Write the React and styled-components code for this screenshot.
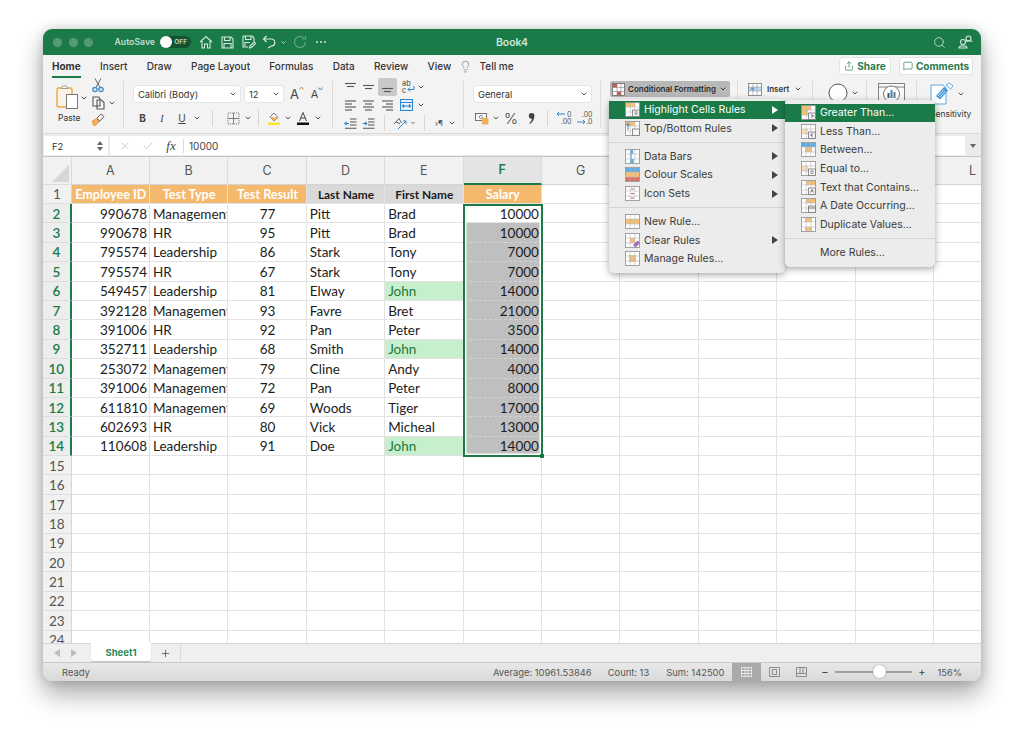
import React from "react";
import styled, { createGlobalStyle } from "styled-components";
import { Search, Check, X, Lightbulb, MessageSquare, Share, ChevronDown, Plus } from "lucide-react";

const UI_FONT = `Inter, "Liberation Sans", Arial, sans-serif`;
const CELL_FONT = `Lato, "Open Sans", sans-serif`;

const GlobalStyle = createGlobalStyle`
  html, body { margin: 0; padding: 0; background: #fff; }
  body { font-family: ${UI_FONT}; width: 1024px; height: 738px; overflow: hidden; }
  * { box-sizing: border-box; }
`;

const Page = styled.div`
  padding: 29px 43px 0;
`;

const Window = styled.div`
  position: relative;
  width: 938px;
  height: 652px;
  border-radius: 9px;
  overflow: visible;
  background: #f3f3f3;
  box-shadow: 0 14px 26px rgba(0, 0, 0, 0.32), 0 0 12px rgba(0, 0, 0, 0.18);
  display: flex;
  flex-direction: column;
`;

/* title bar */
const TitleBar = styled.div`
  height: 26px;
  flex: none;
  background: #1a7a48;
  border-radius: 9px 9px 0 0;
  display: grid;
  grid-template-columns: 1fr auto 1fr;
  align-items: center;
  color: #fff;
`;
const TitleLeft = styled.div`
  display: flex;
  align-items: center;
  padding-left: 10px;
`;
const TitleRight = styled.div`
  display: flex;
  justify-content: flex-end;
  align-items: center;
  gap: 12px;
  padding-right: 8px;
`;
const Light = styled.span`
  width: 9px;
  height: 9px;
  border-radius: 50%;
  margin-right: 6.5px;
  background: #559a76;
`;
const AutoSave = styled.span`
  margin-left: 15px;
  font-size: 8.7px;
  font-weight: 600;
  color: #c5ded0;
`;
const Toggle = styled.span`
  width: 31px;
  height: 12px;
  margin: 0 4px 0 5px;
  border-radius: 6px;
  background: #14532f;
  display: flex;
  align-items: center;
  justify-content: flex-end;
  padding-right: 4px;
  font-size: 6.5px;
  font-weight: 700;
  color: #b7cdbf;
  position: relative;
`;
const Knob = styled.span`
  position: absolute;
  left: 0;
  top: 0;
  width: 12px;
  height: 12px;
  border-radius: 50%;
  background: #fff;
`;
const TitleIcons = styled.div`
  display: flex;
  align-items: center;
`;
const TitleIcon = styled.span`
  width: ${(p) => p.$w}px;
  display: flex;
  justify-content: center;
  opacity: ${(p) => p.$dim || 1};
`;
const BookTitle = styled.div`
  font-size: 10.5px;
  font-weight: 600;
  color: #cfe4d8;
`;

/* tabs */
const TabRow = styled.div`
  height: 22px;
  flex: none;
  display: flex;
  align-items: center;
  padding: 0 8px 0 9px;
  gap: 19.3px;
  font-size: 10px;
  font-weight: 500;
  color: #333;
`;
const Tab = styled.span`
  position: relative;
  font-weight: ${(p) => (p.$active ? 700 : 500)};
`;
const TabLine = styled.span`
  position: absolute;
  left: 0;
  right: 0;
  top: 16px;
  height: 2px;
  background: #1a7a48;
`;
const TellMe = styled.span`
  display: flex;
  align-items: center;
  gap: 8px;
  margin-left: -12px;
`;
const TopButtons = styled.div`
  margin-left: auto;
  display: flex;
  gap: 8px;
`;
const TopButton = styled.span`
  height: 18px;
  width: ${(p) => p.$w}px;
  background: #fff;
  border: 1px solid #e3e3e3;
  border-radius: 3px;
  display: flex;
  align-items: center;
  justify-content: center;
  gap: 3px;
  font-size: 10px;
  font-weight: 700;
  color: #1f7a4d;
`;

/* ribbon */
const Ribbon = styled.div`
  height: 57px;
  flex: none;
  display: flex;
  align-items: stretch;
  border-bottom: 1px solid #d9d9d9;
`;
const Group = styled.div`
  width: ${(p) => p.$w}px;
  flex: none;
  padding: ${(p) => p.$top || 0}px 0 0 ${(p) => p.$left || 0}px;
  display: flex;
  flex-direction: column;
  gap: ${(p) => p.$gap || 0}px;
`;
const GroupRow = styled.div`
  display: flex;
  align-items: flex-start;
`;
const Sep = styled.span`
  width: 1px;
  flex: none;
  height: 47px;
  margin-top: 4px;
  background: #dcdcdc;
`;
const PasteCol = styled.div`
  width: 34px;
  display: flex;
  flex-direction: column;
  align-items: flex-start;
  padding-top: 8px;
  font-size: 8.5px;
  color: #333;
`;
const PasteLabel = styled.span`
  margin: 3px 0 0 2px;
`;
const ToolRow = styled.div`
  height: ${(p) => p.$h || 18}px;
  display: flex;
  align-items: center;
`;
const Tool = styled.span`
  width: ${(p) => p.$w}px;
  height: 18px;
  flex: none;
  display: flex;
  align-items: center;
  justify-content: center;
  border-radius: 2px;
  background: ${(p) => (p.$on ? "#c9c9c9" : "transparent")};
  font-size: ${(p) => p.$fs || 11}px;
  font-weight: ${(p) => p.$fw || 400};
  font-style: ${(p) => (p.$it ? "italic" : "normal")};
  font-family: ${(p) => (p.$serif ? '"Liberation Serif", serif' : UI_FONT)};
  color: #444;
`;
const Divider = styled.span`
  width: ${(p) => p.$w}px;
  height: 16px;
  flex: none;
  display: flex;
  justify-content: center;
  &::before {
    content: "";
    width: 1px;
    background: #d5d5d5;
  }
`;
const Select = styled.div`
  width: ${(p) => p.$w}px;
  height: 18px;
  flex: none;
  margin-right: ${(p) => p.$mr || 0}px;
  padding: 0 3px 0 4px;
  background: #fff;
  border: 1px solid #e6e6e6;
  border-radius: 3px;
  display: flex;
  align-items: center;
  justify-content: space-between;
  font-size: 9.3px;
  color: #333;
`;
const CondButton = styled.div`
  width: 120px;
  height: 16px;
  display: flex;
  align-items: center;
  gap: 3px;
  padding: 0 2px;
  background: #b8b8b8;
  border-radius: 2px;
  font-size: 8px;
  font-weight: 600;
  color: #2c2c2c;
  white-space: nowrap;
`;
const InsertButton = styled.div`
  height: 16px;
  display: flex;
  align-items: center;
  gap: 5px;
  font-size: 8px;
  font-weight: 600;
  color: #333;
`;
const BigIcons = styled.div`
  display: flex;
  align-items: center;
  gap: ${(p) => p.$gap || 2}px;
`;
const SensLabel = styled.div`
  margin-top: 3px;
  font-size: 8.5px;
  color: #333;
`;

/* formula bar */
const FormulaBar = styled.div`
  height: 23px;
  flex: none;
  display: flex;
  align-items: stretch;
  padding: 2px 0 1px 1px;
  background: #ebebeb;
  border-bottom: 1px solid #c6c6c6;
`;
const NameBox = styled.div`
  width: 64px;
  padding: 1px 5px 0 8px;
  background: #fff;
  display: flex;
  align-items: center;
  justify-content: space-between;
  font-size: 9.5px;
  color: #333;
`;
const Stepper = styled.span`
  display: flex;
  flex-direction: column;
  gap: 2px;
`;
const Arrow = styled.span`
  width: 0;
  height: 0;
  border-left: 3px solid transparent;
  border-right: 3px solid transparent;
  ${(p) => (p.$up ? "border-bottom" : "border-top")}: 4px solid #666;
`;
const FormulaInput = styled.div`
  flex: 1;
  margin-left: 2px;
  padding: 1px 0 0 3px;
  background: #fff;
  display: flex;
  align-items: center;
  font-size: 10px;
  color: #444;
`;
const FormulaIcon = styled.span`
  width: ${(p) => p.$w}px;
  display: flex;
  justify-content: center;
  color: #bdbdbd;
`;
const Fx = styled.span`
  font-family: "Liberation Serif", serif;
  font-style: italic;
  font-size: 13px;
  color: #444;
`;
const FormulaValue = styled.span`
  padding-left: 5px;
  border-left: 1px solid #dcdcdc;
  line-height: 14px;
`;
const FormulaEnd = styled.div`
  width: 16px;
  display: flex;
  align-items: center;
  justify-content: center;
`;

/* sheet */
const SheetArea = styled.div`
  position: relative;
  flex: 1;
  min-height: 0;
  overflow: hidden;
  background: #fff;
`;
const SheetGrid = styled.div`
  display: grid;
  grid-template-columns: 28.6px repeat(12, 78.4px);
  grid-template-rows: 27.6px repeat(24, 19.4px);
`;
const Corner = styled.div`
  background: #f1f1f1;
  border-right: 1px solid #dcdcdc;
  border-bottom: 1px solid #dcdcdc;
  position: relative;
  &::after {
    content: "";
    position: absolute;
    right: 2px;
    bottom: 2px;
    border-style: solid;
    border-width: 0 0 17px 17px;
    border-color: transparent transparent #d7d7d7 transparent;
  }
`;
const ColHead = styled.div`
  display: flex;
  align-items: center;
  justify-content: center;
  background: ${(p) => (p.$sel ? "#e4e4e4" : "#f1f1f1")};
  border-right: 1px solid #dcdcdc;
  border-bottom: ${(p) => (p.$sel ? "2px solid #1a7a48" : "1px solid #d4d4d4")};
  font-size: 12.5px;
  color: ${(p) => (p.$sel ? "#1a7a48" : "#555")};
  font-weight: ${(p) => (p.$sel ? 600 : 400)};
`;
const RowHead = styled.div`
  display: flex;
  align-items: center;
  justify-content: center;
  padding-top: 1px;
  background: ${(p) => (p.$sel ? "#ededed" : "#f1f1f1")};
  border-right: ${(p) => (p.$sel ? "2px solid #1a7a48" : "1px solid #d4d4d4")};
  border-bottom: 1px solid #dedede;
  font-family: ${CELL_FONT};
  font-size: 13.5px;
  font-weight: ${(p) => (p.$sel ? 600 : 400)};
  color: ${(p) => (p.$sel ? "#1a7a48" : "#555")};
`;
const cellBackgrounds = { orange: "#f4b96c", gray: "#d9d9d9", john: "#c6efce", sel: "#bfbfbf" };
const Cell = styled.div`
  min-width: 0;
  overflow: hidden;
  white-space: nowrap;
  display: flex;
  align-items: center;
  padding: 1px 2px 0 3px;
  justify-content: ${(p) => p.$align || "flex-start"};
  background: ${(p) => cellBackgrounds[p.$bg] || "#fff"};
  border-right: 1px solid ${(p) => (p.$bg === "sel" ? "#bfbfbf" : "#e2e2e2")};
  border-bottom: ${(p) => (p.$bg === "sel" ? "1px dashed #d2d2d2" : "1px solid #e2e2e2")};
  font-family: ${CELL_FONT};
  font-size: ${(p) => (p.$bg === "orange" ? 12.6 : p.$bg === "gray" ? 11.9 : 13.5)}px;
  font-weight: ${(p) => (p.$bold ? 700 : 400)};
  color: ${(p) => (p.$bg === "john" ? "#1c7a3a" : p.$bg === "orange" ? "#fff" : "#1c1c1c")};
`;
const Selection = styled.div`
  position: absolute;
  left: 420px;
  top: 46.5px;
  width: 79.5px;
  height: 253px;
  border: 2px solid #1a7a48;
  box-shadow: inset 0 0 0 1.5px #fff;
  pointer-events: none;
  &::after {
    content: "";
    position: absolute;
    right: -3.5px;
    bottom: -3.5px;
    width: 4px;
    height: 4px;
    background: #1a7a48;
  }
`;

/* sheet tabs and status */
const SheetTabs = styled.div`
  height: 20px;
  flex: none;
  display: flex;
  align-items: flex-start;
  background: #efefef;
  border-top: 1px solid #d5d5d5;
  border-bottom: 1px solid #c9c9c9;
  font-size: 9.5px;
  color: #444;
`;
const TabArrows = styled.div`
  width: 48px;
  height: 100%;
  display: flex;
  align-items: center;
  padding-left: 11px;
  gap: 11px;
`;
const SideArrow = styled.span`
  width: 0;
  height: 0;
  border-top: 4px solid transparent;
  border-bottom: 4px solid transparent;
  ${(p) => (p.$left ? "border-right" : "border-left")}: 6px solid #bdbdbd;
`;
const SheetTab = styled.div`
  width: 60px;
  height: 18px;
  margin-top: -1px;
  background: #fff;
  border-radius: 0 0 2px 2px;
  box-shadow: 0 1px 1px rgba(0, 0, 0, 0.2);
  display: flex;
  align-items: center;
  justify-content: center;
  font-weight: 700;
  color: #2c8a5a;
`;
const AddSheet = styled.div`
  width: 30px;
  height: 18px;
  border-right: 1px solid #d9d9d9;
  display: flex;
  align-items: center;
  justify-content: center;
  color: #444;
`;
const StatusBar = styled.div`
  height: 18px;
  flex: none;
  display: flex;
  align-items: center;
  border-radius: 0 0 9px 9px;
  background: linear-gradient(#e8e8e8, #d9d9d9);
  font-size: 9.4px;
  color: #555;
  padding-left: 19px;
`;
const StatusRight = styled.div`
  margin-left: auto;
  display: flex;
  align-items: center;
  height: 100%;
`;
const StatusText = styled.span`
  margin-right: ${(p) => p.$mr}px;
`;
const ViewBtn = styled.span`
  width: ${(p) => p.$w}px;
  height: 100%;
  margin-right: ${(p) => p.$mr || 0}px;
  display: flex;
  align-items: center;
  justify-content: center;
  background: ${(p) => (p.$on ? "#a9a9a9" : "transparent")};
`;
const Slider = styled.span`
  position: relative;
  width: 77px;
  height: 2px;
  margin: 0 4px 0 5px;
  background: #a0a0a0;
`;
const SliderKnob = styled.span`
  position: absolute;
  left: 38px;
  top: -6px;
  width: 13px;
  height: 13px;
  border-radius: 50%;
  background: #fff;
  box-shadow: 0 0 2px rgba(0, 0, 0, 0.35);
`;
const Zoom = styled.span`
  margin: 0 19px 0 10px;
`;

/* menus */
const Menu = styled.div`
  position: absolute;
  left: ${(p) => p.$left}px;
  top: ${(p) => p.$top}px;
  width: ${(p) => p.$w}px;
  padding: ${(p) => p.$pad}px 0 5px;
  background: #ececec;
  border-radius: 5px;
  box-shadow: 0 2px 7px rgba(0, 0, 0, 0.35);
  font-size: 10.5px;
  font-weight: 400;
  color: #3a3a3a;
  z-index: ${(p) => p.$z || 5};
`;
const MenuItem = styled.div`
  height: 18.6px;
  display: flex;
  align-items: center;
  padding-left: ${(p) => p.$left}px;
  background: ${(p) => (p.$on ? "#1a7a48" : "transparent")};
  color: ${(p) => (p.$on ? "#fff" : "inherit")};
`;
const MenuIcon = styled.span`
  width: 19px;
  flex: none;
  display: flex;
`;
const MenuArrow = styled.span`
  margin-left: auto;
  margin-right: 7px;
  width: 0;
  height: 0;
  border-top: 4px solid transparent;
  border-bottom: 4px solid transparent;
  border-left: 6px solid ${(p) => (p.$on ? "#fff" : "#444")};
`;
const MenuSep = styled.div`
  height: 1px;
  margin: 4.2px 0;
  background: #d4d4d4;
`;

/* icons */
const Chev = ({ size = 8, color = "#444" }) => <ChevronDown size={size} color={color} strokeWidth={2.8} />;

const Glyph = ({ w = 14, h = 14, children, stroke = "currentColor", sw = 1.1 }) => (
  <svg width={w} height={h} viewBox={`0 0 ${w} ${h}`} fill="none" stroke={stroke} strokeWidth={sw}>
    {children}
  </svg>
);

const Lines = ({ rows }) => (
  <Glyph w={13} h={11} stroke="#555">
    {rows.map(([x1, x2, y, color], i) => (
      <path key={i} d={`M${x1} ${y}H${x2}`} stroke={color || "#555"} />
    ))}
  </Glyph>
);

const alignTop = [[1, 12, 1.5], [3, 10, 4.5]];
const alignMid = [[1, 12, 3.5], [3, 10, 6.5]];
const alignBottom = [[1, 12, 6.5], [3, 10, 9.5]];
const alignLeft = [[1, 12, 1], [1, 8, 4], [1, 12, 7], [1, 8, 10]];
const alignCenter = [[1, 12, 1], [3, 10, 4], [1, 12, 7], [3, 10, 10]];
const alignRight = [[1, 12, 1], [5, 12, 4], [1, 12, 7], [5, 12, 10]];

const IndentIcon = ({ right }) => (
  <Glyph w={13} h={11} stroke="#555">
    <path d="M6 1H12.5M6 4H12.5M6 7H12.5M1 10.2H12.5" />
    <path d={right ? "M.5 5.5H4.5M3 3.8l1.8 1.7L3 7.2" : "M5 5.5H1M2.6 3.8L.8 5.5l1.8 1.7"} stroke="#2a87d0" />
  </Glyph>
);

const PasteIcon = () => (
  <svg width="23" height="25" viewBox="0 0 23 25" fill="none">
    <rect x="1" y="3" width="15" height="19" rx="1.5" stroke="#eba64a" strokeWidth="1.4" fill="#fbf3e6" />
    <path d="M5.5 3.5L6.5 1h4l1 2.5z" fill="#fff" stroke="#8a8a8a" strokeWidth=".8" />
    <rect x="10.5" y="9.5" width="11" height="14" fill="#fff" stroke="#777" strokeWidth="1" />
  </svg>
);
const CutIcon = () => (
  <svg width="12" height="15" viewBox="0 0 12 15" fill="none">
    <path d="M3 .5L8 9.5M9 .5L4 9.5" stroke="#666" strokeWidth="1" />
    <circle cx="3" cy="11.5" r="2.2" fill="#cfe3f3" stroke="#3d87c4" strokeWidth="1.2" />
    <circle cx="9" cy="11.5" r="2.2" fill="#cfe3f3" stroke="#3d87c4" strokeWidth="1.2" />
  </svg>
);
const CopyIcon = () => (
  <Glyph w={13} h={14} stroke="#555">
    <path d="M1 1H6.5L8 2.5V10H1zM5 4H9.5L12 6.5V13H5z" fill="#f6f6f6" />
  </Glyph>
);
const PainterIcon = () => (
  <svg width="14" height="13" viewBox="0 0 14 13" fill="none">
    <path d="M1 8L5.5 5.5L8 9L4.5 12.5H2.5z" fill="#f0b05a" stroke="#e29a3d" strokeWidth=".8" />
    <path d="M6 5L10 1L13 3.5L8.5 8.5z" stroke="#555" strokeWidth=".9" />
  </svg>
);
const CommaIcon = () => (
  <svg width="7" height="13" viewBox="0 0 7 13" fill="#444">
    <path d="M3.5 1a2.8 2.8 0 0 1 2.9 3c0 3-1.6 6-4.4 8l-.7-.8c1.6-1.4 2.4-2.8 2.6-4.4A2.8 2.8 0 1 1 3.5 1z" />
  </svg>
);
const FontSizeRow = styled.span`
  display: flex;
  align-items: flex-start;
  color: #444;
  font-size: ${(p) => (p.$up ? 13 : 11)}px;
`;
const FontSizeIcon = ({ up }) => (
  <FontSizeRow $up={up}>
    A
    <svg width="5" height="4" viewBox="0 0 5 4" fill="none" stroke={up ? "#c98a2b" : "#2a87d0"} strokeWidth="1">
      <path d={up ? "M.5 3.5L2.5 1L4.5 3.5" : "M.5 .5L2.5 3L4.5 .5"} />
    </svg>
  </FontSizeRow>
);
const BordersIcon = () => (
  <Glyph w={13} h={13} stroke="#777" sw={0.9}>
    <path d="M1 1H12V12H1zM6.5 1V12M1 6.5H12" strokeDasharray="1.2 .8" />
    <path d="M1 6.5H12M6.5 1V12" />
  </Glyph>
);
const FillIcon = () => (
  <svg width="14" height="14" viewBox="0 0 14 14" fill="none">
    <path d="M3 6L7 2L11 6.5L7 10z" fill="#fff" stroke="#666" strokeWidth=".9" />
    <path d="M3 6.2H10.5L7 10z" fill="#f0b05a" />
    <rect x="1" y="11.5" width="12" height="2.5" fill="#f7e829" />
  </svg>
);
const FontColorIcon = () => (
  <svg width="14" height="14" viewBox="0 0 14 14" fill="none">
    <path d="M3.5 10L7 1.5L10.5 10M4.8 7H9.2" stroke="#444" strokeWidth="1" />
    <rect x="1" y="11.5" width="12" height="2.5" fill="#111" />
  </svg>
);
const WrapBox = styled.span`
  position: relative;
  display: flex;
  flex-direction: column;
  font-size: 7.5px;
  line-height: 7px;
  color: #444;
  svg {
    position: absolute;
    left: 5px;
    top: 6px;
  }
`;
const WrapIcon = () => (
  <WrapBox>
    <span>ab</span>
    <span>c</span>
    <svg width="8" height="7" viewBox="0 0 8 7" fill="none" stroke="#2a87d0" strokeWidth="1">
      <path d="M7 0V3.5H1M3 1.5L1 3.5L3 5.5" />
    </svg>
  </WrapBox>
);
const MergeIcon = () => (
  <Glyph w={13} h={12} stroke="#2a87d0">
    <rect x=".5" y=".5" width="12" height="11" fill="#eaf3fa" />
    <path d="M.5 3.5H12.5M2.5 7H10.5M4 5.5L2.5 7L4 8.5M9 5.5L10.5 7L9 8.5" />
  </Glyph>
);
const OrientIcon = () => (
  <svg width="14" height="13" viewBox="0 0 14 13" fill="none">
    <path d="M1 7L6 1.5L8.5 6M3 5l4 1.6" stroke="#555" strokeWidth=".9" />
    <path d="M5 12L13 4M10 4H13V7" stroke="#2a87d0" strokeWidth="1" />
  </svg>
);
const CurrencyIcon = () => (
  <svg width="14" height="13" viewBox="0 0 14 13" fill="none">
    <rect x=".5" y="1.5" width="11" height="7" stroke="#666" strokeWidth=".9" fill="#f7f7f7" />
    <circle cx="6" cy="5" r="1.6" stroke="#666" strokeWidth=".7" />
    <rect x="7" y="6" width="6.5" height="6.5" rx="1" fill="#f0b05a" />
  </svg>
);
const DecimalBox = styled.span`
  position: relative;
  display: block;
  width: 16px;
  height: 14px;
  font-size: 7px;
  line-height: 7px;
  color: #555;
  text-align: right;
  svg {
    position: absolute;
    left: 0;
    top: ${(p) => (p.$more ? 8 : 0)}px;
  }
`;
const DecimalIcon = ({ more }) => (
  <DecimalBox $more={more}>
    {more ? ".00" : "0"}
    <br />
    {more ? ".0" : ".00"}
    <svg width="9" height="6" viewBox="0 0 9 6" fill="none" stroke="#2a87d0" strokeWidth="1">
      <path d={more ? "M0 3H8M6 1L8 3L6 5" : "M9 3H1M3 1L1 3L3 5"} />
    </svg>
  </DecimalBox>
);
const InsertIcon = () => (
  <svg width="14" height="13" viewBox="0 0 14 13" fill="none">
    <rect x=".5" y=".5" width="13" height="12" stroke="#777" strokeWidth=".8" fill="#fff" />
    <rect x="1" y="4" width="12" height="4" fill="#bcdaf1" />
    <path d="M.5 4H13.5M.5 8H13.5M5 .5V12.5M9 .5V12.5" stroke="#999" strokeWidth=".6" />
    <path d="M2.5 6H6M4.5 4.5L6 6L4.5 7.5" stroke="#2a87d0" strokeWidth=".9" />
  </svg>
);
const AnalyzeIcon = () => (
  <svg width="27" height="21" viewBox="0 0 27 21" fill="none">
    <rect x=".5" y=".5" width="26" height="20" stroke="#777" strokeWidth=".9" fill="#f8f8f8" />
    <path d="M.5 4H26.5" stroke="#777" strokeWidth=".9" />
    <circle cx="13.5" cy="11" r="8" fill="#fff" stroke="#777" />
    <rect x="9.5" y="10" width="2" height="5" fill="#555" />
    <rect x="12.5" y="7" width="2" height="8" fill="#2a87d0" />
    <rect x="15.5" y="9" width="2" height="6" fill="#777" />
  </svg>
);
const SensitivityIcon = () => (
  <svg width="24" height="24" viewBox="0 0 24 24" fill="none">
    <path d="M1 3H13L16 6V22H1z" fill="#fff" stroke="#5aa9e0" strokeWidth="1" />
    <path d="M6 14L14 5L18 8.5L10 17.5z" fill="#3f93d6" />
    <path d="M8 14L14 7.5M9.5 15.5L15.5 9" stroke="#fff" strokeWidth=".8" />
    <path d="M16 3L19 .8L23 4L20.5 7z" fill="#fff" stroke="#5aa9e0" strokeWidth="1" />
  </svg>
);
const CondIcon = () => (
  <svg width="13" height="13" viewBox="0 0 13 13" fill="none">
    <rect x=".5" y=".5" width="12" height="12" fill="#fff" stroke="#666" strokeWidth=".8" />
    <rect x="1" y="1" width="4" height="3.5" fill="#d9534f" />
    <rect x="5" y="8.5" width="4" height="3.5" fill="#d9534f" />
    <path d="M.5 4.5H12.5M.5 8.5H12.5M5 .5V12.5M9 .5V12.5" stroke="#888" strokeWidth=".6" />
  </svg>
);

// cell-grid picture used by every conditional formatting menu row
const RuleIcon = ({ patches = [], badge, children }) => (
  <svg width="15" height="15" viewBox="0 0 15 15" fill="none">
    <rect x=".5" y=".5" width="14" height="14" fill="#fff" stroke="#8c8c8c" strokeWidth=".8" />
    {patches.map(([x, y, w, h, c], i) => (
      <rect key={i} x={x} y={y} width={w} height={h} fill={c} />
    ))}
    <path d="M.5 5H14.5M.5 10H14.5M5.2 .5V14.5M9.8 .5V14.5" stroke="#bbb" strokeWidth=".6" />
    {badge && <rect x="7.5" y="8" width="7" height="6.5" fill="#f4f4f4" stroke="#777" strokeWidth=".8" />}
    {children}
  </svg>
);

const ORANGE = "#f6c073";
const BLUE = "#5aaee3";
const badgeText = (t) => (
  <path d={t} stroke="#555" strokeWidth=".8" />
);

const ruleIcons = {
  highlight: <RuleIcon patches={[[1, 1, 9, 4, ORANGE]]} badge>{badgeText("M9.5 10H12.5M9.5 12H12.5")}</RuleIcon>,
  top: (
    <RuleIcon patches={[[1, 1, 9, 4, ORANGE]]} badge>
      <path d="M3 9V2.5M1.5 4L3 2.5L4.5 4" stroke="#2a87d0" strokeWidth="1" />
    </RuleIcon>
  ),
  bars: <RuleIcon patches={[[5.2, 1, 3, 4, BLUE], [5.2, 5, 1.5, 5, BLUE], [5.2, 10, 3.5, 4, BLUE]]} />,
  scales: <RuleIcon patches={[[1, 1, 13, 4, BLUE], [1, 5, 13, 5, ORANGE], [1, 10, 13, 4, "#e26a5f"]]} />,
  sets: <RuleIcon><path d="M6 3H9M6 7.5H9M6 12H9" stroke="#d9534f" strokeWidth="1" /></RuleIcon>,
  newRule: <RuleIcon patches={[[5, 5, 9, 5, ORANGE], [1, 5, 4, 5, ORANGE]]} />,
  clear: (
    <RuleIcon patches={[[5, 5, 5, 5, ORANGE]]}>
      <path d="M8 12L12.5 7.5L15 10L10.5 14.5z" fill="#a66cc1" />
    </RuleIcon>
  ),
  manage: <RuleIcon patches={[[4, 4, 7, 7, ORANGE]]} />,
  greater: <RuleIcon patches={[[1, 1, 9, 4, ORANGE], [1, 5, 6, 5, ORANGE]]} badge>{badgeText("M10 9.5L12.5 11L10 12.5")}</RuleIcon>,
  less: <RuleIcon patches={[[1, 5, 6, 5, "#f9dcb1"]]} badge>{badgeText("M12 9.5L9.5 11L12 12.5")}</RuleIcon>,
  between: <RuleIcon patches={[[1, 1, 13, 4, BLUE], [4, 5, 7, 5, ORANGE]]} />,
  equal: <RuleIcon patches={[[1, 5, 6, 5, "#f9dcb1"]]} badge>{badgeText("M9.5 10.2H12.5M9.5 12.2H12.5")}</RuleIcon>,
  text: <RuleIcon patches={[[5, 1, 9, 4, ORANGE]]} badge>{badgeText("M9.5 12.5L11 9.5L12.5 12.5")}</RuleIcon>,
  date: <RuleIcon patches={[[5, 1, 9, 4, ORANGE]]} badge>{badgeText("M7.5 10H14.5")}</RuleIcon>,
  duplicate: <RuleIcon patches={[[4, 1, 7, 4, ORANGE], [4, 10, 7, 4, ORANGE]]} />,
};

const mainMenu = [
  [["highlight", "Highlight Cells Rules", true, true], ["top", "Top/Bottom Rules", true]],
  [["bars", "Data Bars", true], ["scales", "Colour Scales", true], ["sets", "Icon Sets", true]],
  [["newRule", "New Rule..."], ["clear", "Clear Rules", true], ["manage", "Manage Rules..."]],
];
const subMenu = [
  ["greater", "Greater Than...", true],
  ["less", "Less Than..."],
  ["between", "Between..."],
  ["equal", "Equal to..."],
  ["text", "Text that Contains..."],
  ["date", "A Date Occurring..."],
  ["duplicate", "Duplicate Values..."],
];

const columns = ["A", "B", "C", "D", "E", "F", "G", "H", "I", "J", "K", "L"];
const headers = [
  ["Employee ID", "orange"],
  ["Test Type", "orange"],
  ["Test Result", "orange"],
  ["Last Name", "gray"],
  ["First Name", "gray"],
  ["Salary", "orange"],
];
const people = [
  [990678, "Management", 77, "Pitt", "Brad", 10000],
  [990678, "HR", 95, "Pitt", "Brad", 10000],
  [795574, "Leadership", 86, "Stark", "Tony", 7000],
  [795574, "HR", 67, "Stark", "Tony", 7000],
  [549457, "Leadership", 81, "Elway", "John", 14000],
  [392128, "Management", 93, "Favre", "Bret", 21000],
  [391006, "HR", 92, "Pan", "Peter", 3500],
  [352711, "Leadership", 68, "Smith", "John", 14000],
  [253072, "Management", 79, "Cline", "Andy", 4000],
  [391006, "Management", 72, "Pan", "Peter", 8000],
  [611810, "Management", 69, "Woods", "Tiger", 17000],
  [602693, "HR", 80, "Vick", "Micheal", 13000],
  [110608, "Leadership", 91, "Doe", "John", 14000],
];

const emptyCells = (n, key) => Array.from({ length: n }, (_, i) => <Cell key={`${key}-${i}`} />);

const Sheet = () => (
  <SheetGrid>
    <Corner />
    {columns.map((c) => (
      <ColHead key={c} $sel={c === "F"}>{c}</ColHead>
    ))}
    <RowHead>1</RowHead>
    {headers.map(([label, bg]) => (
      <Cell key={label} $bg={bg} $bold $align="center">{label}</Cell>
    ))}
    {emptyCells(6, "head")}
    {people.map((p, i) => (
      <React.Fragment key={i}>
        <RowHead $sel>{i + 2}</RowHead>
        <Cell $align="flex-end">{p[0]}</Cell>
        <Cell>{p[1]}</Cell>
        <Cell $align="center">{p[2]}</Cell>
        <Cell>{p[3]}</Cell>
        <Cell $bg={p[4] === "John" ? "john" : undefined}>{p[4]}</Cell>
        <Cell $align="flex-end" $bg={i === 0 ? undefined : "sel"}>{p[5]}</Cell>
        {emptyCells(6, i)}
      </React.Fragment>
    ))}
    {Array.from({ length: 10 }, (_, i) => (
      <React.Fragment key={i}>
        <RowHead>{i + 15}</RowHead>
        {emptyCells(12, `blank${i}`)}
      </React.Fragment>
    ))}
  </SheetGrid>
);

const RibbonBar = () => (
  <Ribbon>
    <Group $w={80} $left={13}>
      <GroupRow>
        <PasteCol>
          <BigIcons $gap={1}><PasteIcon /><Chev /></BigIcons>
          <PasteLabel>Paste</PasteLabel>
        </PasteCol>
        <div>
          <ToolRow $h={17}><Tool $w={16}><CutIcon /></Tool></ToolRow>
          <ToolRow $h={18}><Tool $w={16}><CopyIcon /></Tool><Tool $w={11}><Chev /></Tool></ToolRow>
          <ToolRow $h={15}><Tool $w={16}><PainterIcon /></Tool></ToolRow>
        </div>
      </GroupRow>
    </Group>
    <Sep />
    <Group $w={208} $left={9} $top={8} $gap={6}>
      <ToolRow>
        <Select $w={108} $mr={3}>Calibri (Body)<Chev /></Select>
        <Select $w={40} $mr={3}>12<Chev /></Select>
        <Tool $w={20}><FontSizeIcon up /></Tool>
        <Tool $w={20}><FontSizeIcon /></Tool>
      </ToolRow>
      <ToolRow>
        <Tool $w={19} $fs={10} $fw={700}>B</Tool>
        <Tool $w={20} $fs={10} $it $serif>I</Tool>
        <Tool $w={20} $fs={10}><u>U</u></Tool>
        <Tool $w={10}><Chev /></Tool>
        <Divider $w={20} />
        <Tool $w={22}><BordersIcon /></Tool>
        <Tool $w={8}><Chev /></Tool>
        <Divider $w={12} />
        <Tool $w={20}><FillIcon /></Tool>
        <Tool $w={8}><Chev /></Tool>
        <Tool $w={22}><FontColorIcon /></Tool>
        <Tool $w={8}><Chev /></Tool>
      </ToolRow>
    </Group>
    <Sep />
    <Group $w={130} $left={8} $top={1}>
      <ToolRow>
        <Tool $w={18.5}><Lines rows={alignTop} /></Tool>
        <Tool $w={18.5}><Lines rows={alignMid} /></Tool>
        <Tool $w={18.5} $on><Lines rows={alignBottom} /></Tool>
        <Tool $w={20}><WrapIcon /></Tool>
        <Tool $w={8}><Chev /></Tool>
      </ToolRow>
      <ToolRow>
        <Tool $w={18.5}><Lines rows={alignLeft} /></Tool>
        <Tool $w={18.5}><Lines rows={alignCenter} /></Tool>
        <Tool $w={18.5}><Lines rows={alignRight} /></Tool>
        <Tool $w={20}><MergeIcon /></Tool>
        <Tool $w={8}><Chev /></Tool>
      </ToolRow>
      <ToolRow>
        <Tool $w={18.5}><IndentIcon /></Tool>
        <Tool $w={18.5}><IndentIcon right /></Tool>
        <Divider $w={12} />
        <Tool $w={20}><OrientIcon /></Tool>
        <Tool $w={6}><Chev /></Tool>
        <Divider $w={16} />
        <Tool $w={14} $fs={8}>›¶</Tool>
        <Tool $w={12}><Chev /></Tool>
      </ToolRow>
    </Group>
    <Sep />
    <Group $w={136} $left={9} $top={8} $gap={6}>
      <ToolRow><Select $w={119}>General<Chev /></Select></ToolRow>
      <ToolRow>
        <Tool $w={18}><CurrencyIcon /></Tool>
        <Tool $w={10}><Chev /></Tool>
        <Tool $w={20} $fs={15} $fw={300}>%</Tool>
        <Tool $w={20}><CommaIcon /></Tool>
        <Divider $w={12} />
        <Tool $w={21}><DecimalIcon /></Tool>
        <Tool $w={21}><DecimalIcon more /></Tool>
      </ToolRow>
    </Group>
    <Sep />
    <Group $w={136} $left={9} $top={4}>
      <CondButton>
        <CondIcon />
        Conditional Formatting
        <Chev color="#333" />
      </CondButton>
    </Group>
    <Sep />
    <Group $w={74} $left={10} $top={4}>
      <InsertButton><InsertIcon />Insert<Chev /></InsertButton>
    </Group>
    <Sep />
    <Group $w={53} $left={15} $top={6}>
      <BigIcons $gap={3}>
        <Glyph w={20} h={20} stroke="#555" sw={1}><circle cx="10" cy="10" r="9" fill="#fff" /></Glyph>
        <Chev />
      </BigIcons>
    </Group>
    <Sep />
    <Group $w={49} $left={11} $top={6}>
      <AnalyzeIcon />
    </Group>
    <Sep />
    <Group $w={60} $left={13} $top={5}>
      <BigIcons $gap={3}><SensitivityIcon /><Chev /></BigIcons>
      <SensLabel>Sensitivity</SensLabel>
    </Group>
  </Ribbon>
);

const App = () => (
  <Page>
    <GlobalStyle />
    <Window>
      <TitleBar>
        <TitleLeft>
          <Light /><Light /><Light />
          <AutoSave>AutoSave</AutoSave>
          <Toggle><Knob />OFF</Toggle>
          <TitleIcons>
            <TitleIcon $w={22}>
              <Glyph w={14} h={14} stroke="#d7e8de"><path d="M1 7L7 1.5L13 7M3 6V13H5.5V9H8.5V13H11V6" /></Glyph>
            </TitleIcon>
            <TitleIcon $w={21}>
              <Glyph w={13} h={13} stroke="#d7e8de"><path d="M1 1H10L12 3V12H1zM3.5 1V4.5H9V1M3 12V7.5H10V12" /></Glyph>
            </TitleIcon>
            <TitleIcon $w={22}>
              <Glyph w={14} h={14} stroke="#d7e8de"><path d="M1 1H10L12 3V7M6 12H1V1M3.5 1V4.5H9V1M3 11V7.5H8M7.5 13L8 11L12 7L13.5 8.5L9.5 12.5z" /></Glyph>
            </TitleIcon>
            <TitleIcon $w={18}>
              <Glyph w={14} h={14} stroke="#d7e8de" sw={1.2}><path d="M4.5 1L1.5 4L4.5 7M1.5 4H9a3.5 3.5 0 0 1 .5 7L6 13" /></Glyph>
            </TitleIcon>
            <TitleIcon $w={12}><Chev size={7} color="#d7e8de" /></TitleIcon>
            <TitleIcon $w={20} $dim={0.4}>
              <Glyph w={14} h={14} stroke="#d7e8de" sw={1.2}><path d="M12.5 7a5.5 5.5 0 1 1-1.7-4M12.5 1V4H9.5" /></Glyph>
            </TitleIcon>
            <TitleIcon $w={22}>
              <Glyph w={12} h={4} stroke="none"><g fill="#d7e8de"><circle cx="2" cy="2" r="1" /><circle cx="6" cy="2" r="1" /><circle cx="10" cy="2" r="1" /></g></Glyph>
            </TitleIcon>
          </TitleIcons>
        </TitleLeft>
        <BookTitle>Book4</BookTitle>
        <TitleRight>
          <Search size={13} color="#d7e8de" strokeWidth={1.4} />
          <Glyph w={15} h={14} stroke="#d7e8de">
            <circle cx="10.5" cy="3.5" r="2.5" />
            <path d="M7.5 6.5a5 2 0 0 1 7 0" />
            <circle cx="5" cy="7" r="2.5" />
            <path d="M1 13c0-3 8-3 8 0z" />
          </Glyph>
        </TitleRight>
      </TitleBar>

      <TabRow>
        <Tab $active>Home<TabLine /></Tab>
        <Tab>Insert</Tab>
        <Tab>Draw</Tab>
        <Tab>Page Layout</Tab>
        <Tab>Formulas</Tab>
        <Tab>Data</Tab>
        <Tab>Review</Tab>
        <Tab>View</Tab>
        <TellMe><Lightbulb size={13} color="#777" strokeWidth={1.2} />Tell me</TellMe>
        <TopButtons>
          <TopButton $w={52}><Share size={10} strokeWidth={1.6} />Share</TopButton>
          <TopButton $w={74}><MessageSquare size={10} strokeWidth={1.6} />Comments</TopButton>
        </TopButtons>
      </TabRow>

      <RibbonBar />

      <FormulaBar>
        <NameBox>F2<Stepper><Arrow $up /><Arrow /></Stepper></NameBox>
        <FormulaInput>
          <FormulaIcon $w={24}><X size={12} strokeWidth={1.5} /></FormulaIcon>
          <FormulaIcon $w={22}><Check size={12} strokeWidth={1.5} /></FormulaIcon>
          <FormulaIcon $w={24}><Fx>fx</Fx></FormulaIcon>
          <FormulaValue>10000</FormulaValue>
        </FormulaInput>
        <FormulaEnd><Arrow /></FormulaEnd>
      </FormulaBar>

      <SheetArea>
        <Sheet />
        <Selection />
      </SheetArea>

      <SheetTabs>
        <TabArrows><SideArrow $left /><SideArrow /></TabArrows>
        <SheetTab>Sheet1</SheetTab>
        <AddSheet><Plus size={11} strokeWidth={1.6} /></AddSheet>
      </SheetTabs>
      <StatusBar>
        Ready
        <StatusRight>
          <StatusText $mr={16}>Average: 10961.53846</StatusText>
          <StatusText $mr={17}>Count: 13</StatusText>
          <StatusText $mr={8}>Sum: 142500</StatusText>
          <ViewBtn $w={29} $on>
            <Glyph w={11} h={10} stroke="#f4f4f4" sw={0.8}><path d="M.5 .5H10.5V9.5H.5zM.5 3.5H10.5M.5 6.5H10.5M4 .5V9.5M7 .5V9.5" /></Glyph>
          </ViewBtn>
          <ViewBtn $w={26}>
            <Glyph w={11} h={10} stroke="#777" sw={0.8}><path d="M.5 .5H10.5V9.5H.5zM3.5 2.5H7.5V7.5H3.5z" /></Glyph>
          </ViewBtn>
          <ViewBtn $w={28} $mr={4}>
            <Glyph w={11} h={10} stroke="#777" sw={0.8}><path d="M.5 .5H10.5V9.5H.5zM.5 6.5H10.5M4 .5V6.5M7 .5V6.5" /></Glyph>
          </ViewBtn>
          <Tool $w={11} $fs={11}>−</Tool>
          <Slider><SliderKnob /></Slider>
          <Tool $w={11} $fs={11}>+</Tool>
          <Zoom>156%</Zoom>
        </StatusRight>
      </StatusBar>

      <Menu $left={566} $top={70} $w={176} $pad={1.5}>
        {mainMenu.map((section, s) => (
          <React.Fragment key={s}>
            {s > 0 && <MenuSep />}
            {section.map(([icon, label, arrow, on]) => (
              <MenuItem key={label} $left={16} $on={on}>
                <MenuIcon>{ruleIcons[icon]}</MenuIcon>
                {label}
                {arrow && <MenuArrow $on={on} />}
              </MenuItem>
            ))}
          </React.Fragment>
        ))}
        <Menu $left={176} $top={1} $w={150} $pad={3.5} $z={6}>
          {subMenu.map(([icon, label, on]) => (
            <MenuItem key={label} $left={16} $on={on}>
              <MenuIcon>{ruleIcons[icon]}</MenuIcon>
              {label}
            </MenuItem>
          ))}
          <MenuSep />
          <MenuItem $left={35}>More Rules...</MenuItem>
        </Menu>
      </Menu>
    </Window>
  </Page>
);

export default App;
